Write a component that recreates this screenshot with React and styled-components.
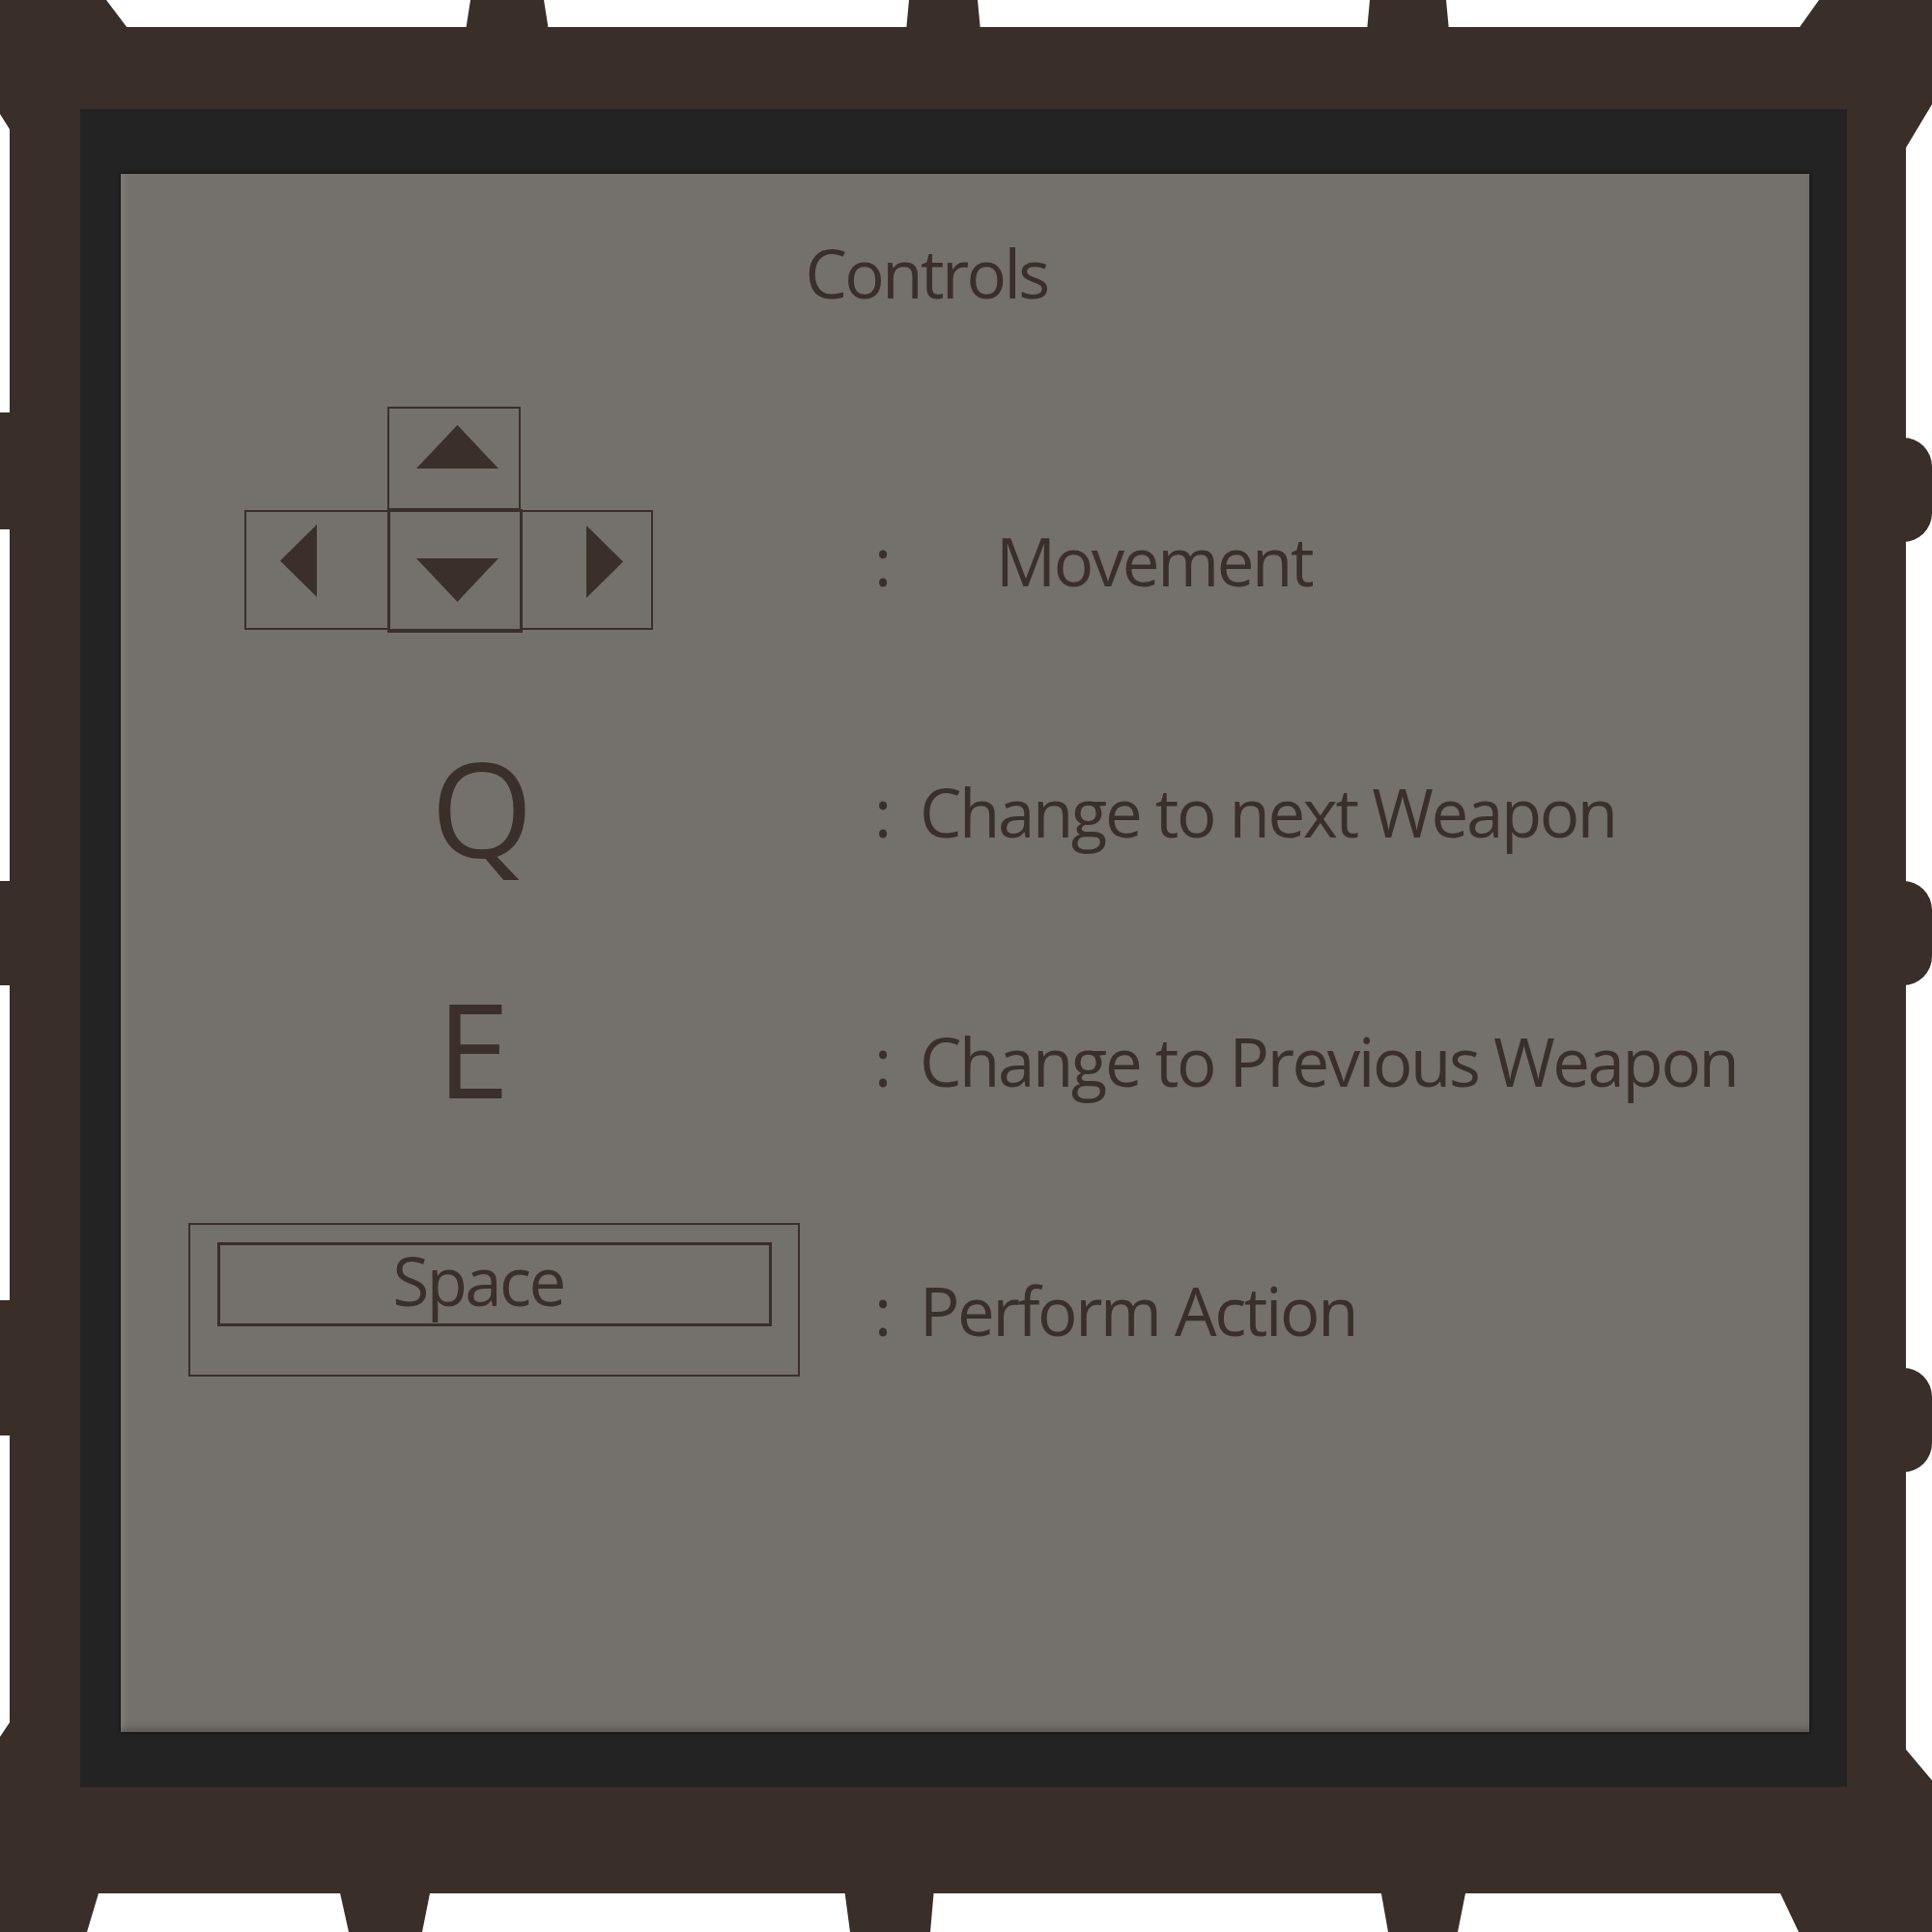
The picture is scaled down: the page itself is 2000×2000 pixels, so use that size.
import React from 'react'
import styled, { createGlobalStyle } from 'styled-components'

const BROWN = '#3a2e29'
const INK = '#3a2f2a'
const BAND = '#232323'
const SCREEN = '#74706c'

const GlobalStyle = createGlobalStyle`
  html, body {
    margin: 0;
    padding: 0;
    background: #ffffff;
  }
  body {
    font-family: "Open Sans", "Noto Sans", sans-serif;
  }
`

const Page = styled.div`
  position: relative;
  width: 2000px;
  height: 2000px;
  box-sizing: border-box;
  padding: 28px 27px 40px 10px;
  display: flex;
  overflow: hidden;
  background: #ffffff;
`

const Frame = styled.div`
  position: relative;
  z-index: 1;
  flex: 1;
  display: flex;
  background: ${BROWN};
  padding: 85px 61px 110px 73px;
`

const Bezel = styled.div`
  flex: 1;
  display: flex;
  background: ${BAND};
  padding: 67px 39px 57px 42px;
`

const Screen = styled.section`
  flex: 1;
  display: flex;
  flex-direction: column;
  background: ${SCREEN};
  padding-top: 68px;
  box-shadow: 0 0 4px 1px rgba(0, 0, 0, 0.45),
    inset 7px 0 6px -4px rgba(255, 255, 255, 0.1),
    inset 0 -8px 8px -6px rgba(0, 0, 0, 0.3);
`

// frame ornaments: the little tabs and chamfered corners sticking out of the border
const Tab = styled.span`
  position: absolute;
  z-index: 0;
  left: ${(p) => p.$x}px;
  top: ${(p) => p.$y}px;
  width: ${(p) => p.$w}px;
  height: ${(p) => p.$h}px;
  background: ${BROWN};
  clip-path: ${(p) => p.$clip || 'none'};
  border-radius: ${(p) => p.$radius || '0'};
`

const Title = styled.h1`
  margin: 0;
  padding-right: 80px;
  font-weight: 400;
  font-size: 69px;
  line-height: 69px;
  letter-spacing: -2.6px;
  text-align: center;
  color: ${INK};
`

const ControlList = styled.div`
  display: grid;
  row-gap: 113px;
  margin-top: 104px;
`

const Row = styled.div`
  display: grid;
  grid-template-columns: 780px 1fr;
  align-items: start;
`

const KeySlot = styled.div`
  display: flex;
  padding-left: ${(p) => p.$left}px;
`

const ArrowPad = styled.div`
  display: flex;
  flex-direction: column;
  align-items: flex-start;
`

const ArrowRow = styled.div`
  display: flex;
  align-items: flex-start;
  padding-left: ${(p) => p.$inset || 0}px;
`

const Key = styled.div`
  box-sizing: border-box;
  width: ${(p) => p.$w}px;
  height: ${(p) => p.$h}px;
  margin-left: ${(p) => (p.$overlap ? -2 : 0)}px;
  margin-top: ${(p) => (p.$heavy ? -1 : 0)}px;
  border: solid ${INK};
  border-width: ${(p) => (p.$heavy ? '3px 3px 4px' : '2px')};
  padding: ${(p) => p.$pad || '0'};
  display: flex;
  align-items: center;
  justify-content: center;
`

const Letter = styled.div`
  font-size: 136px;
  line-height: 136px;
  color: ${INK};
`

const SpaceBar = styled.div`
  box-sizing: border-box;
  width: 633px;
  height: 159px;
  border: 2.5px solid ${INK};
  padding: 18px 27px 0 28px;
`

const SpaceCap = styled.div`
  box-sizing: border-box;
  height: 87px;
  border: 3px solid ${INK};
  padding: 0 34px 8px 0;
  display: flex;
  align-items: center;
  justify-content: center;
  font-size: 69px;
  line-height: 69px;
  letter-spacing: -2.6px;
  color: ${INK};
`

const Description = styled.div`
  display: flex;
  align-items: baseline;
  margin-top: ${(p) => p.$top}px;
  font-size: 69px;
  line-height: 69px;
  color: ${INK};
`

const Colon = styled.span`
  width: 47px;
`

const Label = styled.span`
  margin-left: ${(p) => p.$indent || 0}px;
  letter-spacing: -2.4px;
  white-space: nowrap;
`

const TRIANGLES = {
  up: { w: 85, h: 45, points: '0,45 42.5,0 85,45' },
  down: { w: 85, h: 45, points: '0,0 85,0 42.5,45' },
  left: { w: 38, h: 75, points: '38,0 0,37.5 38,75' },
  right: { w: 38, h: 75, points: '0,0 38,37.5 0,75' },
}

const Triangle = ({ dir }) => {
  const t = TRIANGLES[dir]
  return (
    <svg width={t.w} height={t.h} viewBox={`0 0 ${t.w} ${t.h}`}>
      <polygon points={t.points} fill={INK} />
    </svg>
  )
}

const ornaments = [
  // top tabs
  { x: 482, y: 0, w: 86, h: 32, clip: 'polygon(5px 0, calc(100% - 5px) 0, 100% 100%, 0 100%)' },
  { x: 938, y: 0, w: 77, h: 32, clip: 'polygon(3px 0, calc(100% - 3px) 0, 100% 100%, 0 100%)' },
  { x: 1415, y: 0, w: 85, h: 32, clip: 'polygon(3px 0, calc(100% - 3px) 0, 100% 100%, 0 100%)' },
  // bottom tabs
  { x: 351, y: 1955, w: 95, h: 45, clip: 'polygon(0 0, 100% 0, calc(100% - 9px) 100%, 10px 100%)' },
  { x: 874, y: 1955, w: 93, h: 45, clip: 'polygon(0 0, 100% 0, calc(100% - 4px) 100%, 6px 100%)' },
  { x: 1429, y: 1955, w: 89, h: 45, clip: 'polygon(0 0, 100% 0, calc(100% - 9px) 100%, 8px 100%)' },
  // left tabs
  { x: 0, y: 427, w: 14, h: 121 },
  { x: 0, y: 912, w: 14, h: 108 },
  { x: 0, y: 1346, w: 14, h: 140 },
  // right bumps
  { x: 1968, y: 453, w: 32, h: 108, radius: '0 30px 30px 0 / 0 30px 30px 0' },
  { x: 1968, y: 912, w: 32, h: 108, radius: '0 30px 30px 0 / 0 30px 30px 0' },
  { x: 1968, y: 1416, w: 32, h: 108, radius: '0 30px 30px 0 / 0 30px 30px 0' },
  // corners
  { x: 0, y: 0, w: 140, h: 140, clip: 'polygon(0 0, 110px 0, 135px 33px, 140px 33px, 140px 140px, 12px 140px, 12px 137px, 0 118px)' },
  { x: 1850, y: 0, w: 150, h: 170, clip: 'polygon(0 28px, 13px 28px, 33px 0, 150px 0, 150px 108px, 123px 153px, 123px 170px, 0 170px)' },
  { x: 0, y: 1770, w: 120, h: 230, clip: 'polygon(12px 0, 120px 0, 120px 190px, 102px 190px, 90px 230px, 0 230px, 0 28px, 12px 10px)' },
  { x: 1830, y: 1790, w: 170, h: 210, clip: 'polygon(0 0, 143px 0, 143px 21px, 170px 53px, 170px 210px, 32px 210px, 13px 170px, 0 170px)' },
]

const App = () => {
  return (
    <>
      <GlobalStyle />
      <Page>
        {ornaments.map((o, i) => (
          <Tab key={i} $x={o.x} $y={o.y} $w={o.w} $h={o.h} $clip={o.clip} $radius={o.radius} />
        ))}
        <Frame>
          <Bezel>
            <Screen>
              <Title>Controls</Title>

              <ControlList>
                <Row>
                  <KeySlot $left={128}>
                    <ArrowPad>
                      <ArrowRow $inset={148}>
                        <Key $w={138} $h={107} $pad="0 0 24px 7px"><Triangle dir="up" /></Key>
                      </ArrowRow>
                      <ArrowRow>
                        <Key $w={150} $h={124} $pad="0 38px 20px 0"><Triangle dir="left" /></Key>
                        <Key $w={140} $h={128} $heavy $overlap $pad="19px 0 0 5px"><Triangle dir="down" /></Key>
                        <Key $w={137} $h={124} $overlap $pad="0 0 18px 37px"><Triangle dir="right" /></Key>
                      </ArrowRow>
                    </ArrowPad>
                  </KeySlot>
                  <Description $top={125}>
                    <Colon>:</Colon>
                    <Label $indent={79}>Movement</Label>
                  </Description>
                </Row>

                <Row>
                  <KeySlot $left={321}>
                    <Letter>Q</Letter>
                  </KeySlot>
                  <Description $top={38}>
                    <Colon>:</Colon>
                    <Label>Change to next Weapon</Label>
                  </Description>
                </Row>

                <Row>
                  <KeySlot $left={327}>
                    <Letter>E</Letter>
                  </KeySlot>
                  <Description $top={47}>
                    <Colon>:</Colon>
                    <Label>Change to Previous Weapon</Label>
                  </Description>
                </Row>

                <Row>
                  <KeySlot $left={70}>
                    <SpaceBar>
                      <SpaceCap>Space</SpaceCap>
                    </SpaceBar>
                  </KeySlot>
                  <Description $top={56}>
                    <Colon>:</Colon>
                    <Label>Perform Action</Label>
                  </Description>
                </Row>
              </ControlList>
            </Screen>
          </Bezel>
        </Frame>
      </Page>
    </>
  )
}

export default App
